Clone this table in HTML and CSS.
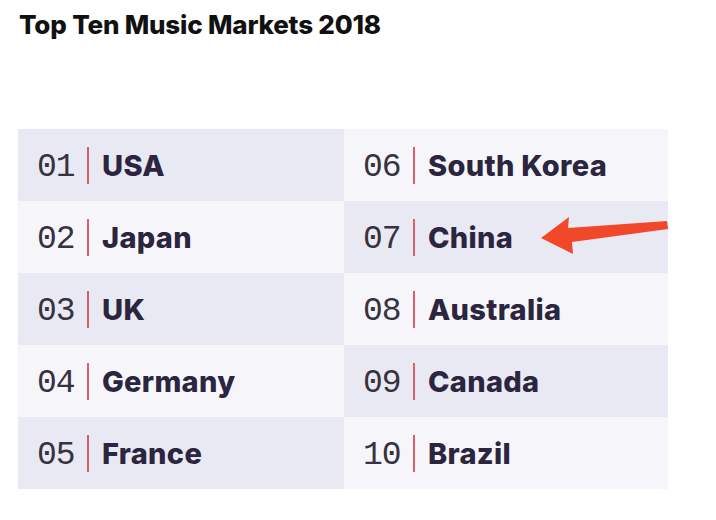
FILE: index.html
```html
<!DOCTYPE html>
<html>
<head>
<meta charset="utf-8">
<link rel="stylesheet" href="styles.css">
</head>
<body>
<div class="page">
  <h1 class="title">Top Ten Music Markets 2018</h1>
  <div class="grid">
    <div class="cell dark"><span class="num">01</span><span class="bar"></span><span class="name">USA</span></div>
    <div class="cell light"><span class="num">06</span><span class="bar"></span><span class="name">South Korea</span></div>
    <div class="cell light"><span class="num">02</span><span class="bar"></span><span class="name">Japan</span></div>
    <div class="cell dark"><span class="num">07</span><span class="bar"></span><span class="name">China</span></div>
    <div class="cell dark"><span class="num">03</span><span class="bar"></span><span class="name">UK</span></div>
    <div class="cell light"><span class="num">08</span><span class="bar"></span><span class="name">Australia</span></div>
    <div class="cell light"><span class="num">04</span><span class="bar"></span><span class="name">Germany</span></div>
    <div class="cell dark"><span class="num">09</span><span class="bar"></span><span class="name">Canada</span></div>
    <div class="cell dark"><span class="num">05</span><span class="bar"></span><span class="name">France</span></div>
    <div class="cell light"><span class="num">10</span><span class="bar"></span><span class="name">Brazil</span></div>
  </div>
  <svg class="arrow" width="716" height="520" viewBox="0 0 716 520">
    <polygon points="541,238 569,217 568,228 667,221 668,229 572,242 573,254" fill="#f2482a"/>
  </svg>
</div>
</body>
</html>
```
FILE: styles.css
```css
html, body {
  margin: 0;
  padding: 0;
  background: #ffffff;
}
.page {
  position: relative;
  width: 716px;
  height: 520px;
  padding: 10px 0 0 18px;
  box-sizing: border-box;
}
.title {
  margin: 0 0 0 1px;
  font-family: Inter, "Liberation Sans", sans-serif;
  font-weight: 800;
  font-size: 26px;
  line-height: 30px;
  letter-spacing: -0.2px;
  color: #111111;
}
.grid {
  margin-top: 89px;
  display: grid;
  grid-template-columns: 326px 324px;
  grid-auto-rows: 72px;
  width: 650px;
}
.cell {
  display: flex;
  align-items: center;
  padding-left: 19px;
}
.dark { background: #e9e9f3; }
.light { background: #f5f5fa; }
.num {
  font-family: "Liberation Mono", monospace;
  font-size: 33px;
  line-height: 36px;
  padding-top: 5px;
  color: #36323f;
  width: 40px;
  letter-spacing: -1px;
}
.bar {
  width: 2px;
  height: 37px;
  background: #d9606b;
  margin-left: 10px;
  margin-right: 13px;
}
.name {
  font-family: Inter, "Liberation Sans", sans-serif;
  font-weight: 800;
  font-size: 29px;
  letter-spacing: 0.3px;
  color: #2c2540;
}
.arrow {
  position: absolute;
  left: 0;
  top: 0;
  pointer-events: none;
}
```
